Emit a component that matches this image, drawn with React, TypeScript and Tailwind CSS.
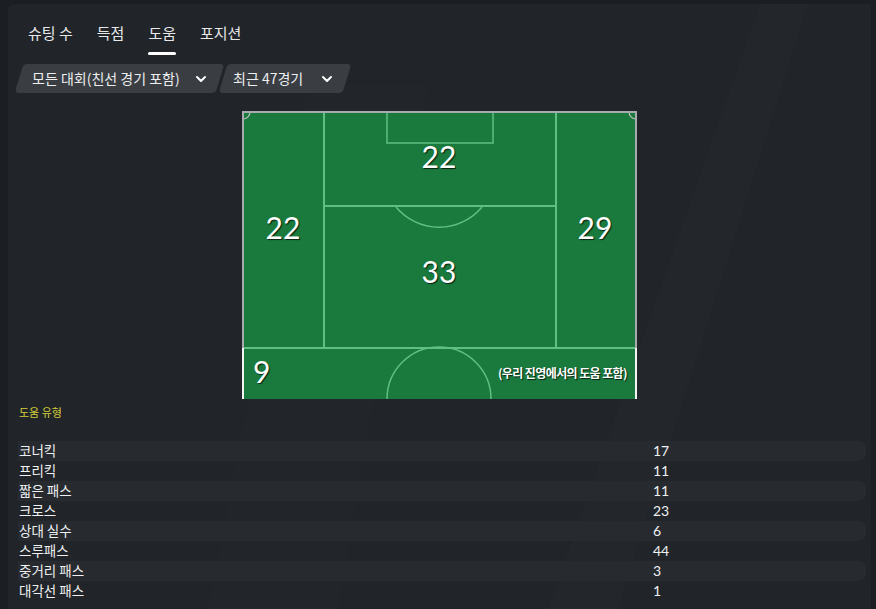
import { ChevronDown } from 'lucide-react'

const TABS = ['슈팅 수', '득점', '도움', '포지션']

const ASSIST_TYPES: [string, number][] = [
  ['코너킥', 17],
  ['프리킥', 11],
  ['짧은 패스', 11],
  ['크로스', 23],
  ['상대 실수', 6],
  ['스루패스', 44],
  ['중거리 패스', 3],
  ['대각선 패스', 1],
]

const KR = { fontFamily: '"Noto Sans CJK KR", "Noto Sans", sans-serif' }
const NUM = { fontFamily: 'Lato, "Noto Sans CJK KR", sans-serif' }

// ── Pitch ────────────────────────────────────────────────────────────────────

function PitchLines() {
  const line = '#5fbf80'
  return (
    <svg className="absolute inset-0" width="395" height="288" viewBox="0 0 395 288">
      {/* zone lines */}
      <line x1="82" y1="0" x2="82" y2="237" stroke={line} strokeWidth="2" />
      <line x1="314" y1="0" x2="314" y2="237" stroke={line} strokeWidth="2" />
      <line x1="82" y1="95" x2="314" y2="95" stroke={line} strokeWidth="2" />
      <line x1="0" y1="237" x2="395" y2="237" stroke={line} strokeWidth="2" />
      {/* six-yard box */}
      <rect x="145" y="0" width="106" height="32" fill="none" stroke={line} strokeWidth="1.5" />
      {/* D */}
      <path d="M154 96 A 56 56 0 0 0 240 96" fill="none" stroke={line} strokeWidth="1.5" />
      {/* centre circle */}
      <path d="M145 288 A 52 52 0 0 1 249 288" fill="none" stroke={line} strokeWidth="1.5" />
      {/* corner arcs */}
      <path d="M1 8 A 7 7 0 0 0 8 1" fill="none" stroke="#b9bdb9" strokeWidth="1.2" />
      <path d="M387 1 A 7 7 0 0 0 394 8" fill="none" stroke="#b9bdb9" strokeWidth="1.2" />
      {/* outer border */}
      <path d="M1 237 V1 H394 V237" fill="none" stroke="#a7abad" strokeWidth="2" />
      <path d="M1 237 V288 M394 237 V288" fill="none" stroke="#f2f4f2" strokeWidth="2" />
    </svg>
  )
}

function Zone({ value, className }: { value: string; className: string }) {
  return (
    <span
      className={`absolute text-[30px] leading-none text-white -translate-x-1/2 -translate-y-1/2 [text-shadow:1px_1px_1px_#06210f] ${className}`}
      style={NUM}
    >
      {value}
    </span>
  )
}

function Pitch() {
  return (
    <div className="relative w-[395px] h-[288px] bg-[#1a7a3e] mx-auto">
      <PitchLines />
      <Zone value="22" className="left-[197px] top-[45px]" />
      <Zone value="22" className="left-[41px] top-[116px]" />
      <Zone value="29" className="left-[353px] top-[116px]" />
      <Zone value="33" className="left-[197px] top-[160px]" />
      <span
        className="absolute left-[11px] top-[260px] -translate-y-1/2 text-[30px] leading-none text-white [text-shadow:1px_1px_1px_#06210f]"
        style={NUM}
      >
        9
      </span>
      <span
        className="absolute right-[10px] top-[262px] -translate-y-1/2 text-[12px] font-bold tracking-[-0.05em] text-white [text-shadow:1px_1px_1px_#06210f]"
        style={KR}
      >
        (우리 진영에서의 도움 포함)
      </span>
    </div>
  )
}

// ── Filters ──────────────────────────────────────────────────────────────────

function FilterPill({ label, className }: { label: string; className: string }) {
  return (
    <div className={`-skew-x-[17deg] bg-[#3a3e43] rounded-[4px] h-[29px] flex items-center ${className}`}>
      <div className="skew-x-[17deg] flex items-center w-full justify-between">
        <span className="text-[14px] text-[#eceef0]" style={KR}>{label}</span>
        <ChevronDown className="w-4 h-4 text-white" strokeWidth={3} />
      </div>
    </div>
  )
}

// ── App ──────────────────────────────────────────────────────────────────────

export default function App() {
  return (
    <div className="w-[876px] h-[609px] bg-[#1b1e22] pl-2 pt-1 pr-[5px] overflow-hidden">
      <div className="relative h-full bg-[#212428] rounded-tl-md overflow-hidden">
        {/* faint diagonal sheen */}
        <svg className="absolute inset-0 pointer-events-none" width="863" height="605">
          <polygon points="752,0 800,0 610,605 540,605" fill="#ffffff" fillOpacity="0.01" />
          <polygon points="300,80 420,80 330,605 200,605" fill="#ffffff" fillOpacity="0.006" />
        </svg>

        <div className="relative">
          {/* tabs */}
          <div className="flex pl-2 pt-[18px]">
            {TABS.map((t) => (
              <div key={t} className="flex flex-col items-center px-3">
                <span className="text-[15px] leading-[22px] text-[#e6e8ea]" style={KR}>{t}</span>
                <div className={`mt-[8px] h-[3px] w-full rounded-full ${t === '도움' ? 'bg-white' : 'bg-transparent'}`} />
              </div>
            ))}
          </div>

          {/* filters */}
          <div className="flex gap-[3px] pl-[11px] mt-[9px]">
            <FilterPill label="모든 대회(친선 경기 포함)" className="w-[201px] pl-[13px] pr-[11px]" />
            <FilterPill label="최근 47경기" className="w-[124px] pl-[10px] pr-[12px]" />
          </div>

          {/* pitch */}
          <div className="mt-[18px]">
            <Pitch />
          </div>

          {/* assist types */}
          <div className="pl-[11px] mt-[5px] text-[11px] text-[#d4cf3c]" style={KR}>도움 유형</div>

          <div className="mt-[20px] pl-[10px] pr-[5px]">
            {ASSIST_TYPES.map(([label, value], i) => (
              <div
                key={label}
                className={`flex items-center h-[20px] rounded-r-lg ${i % 2 === 0 ? 'bg-[#272a2f]' : ''}`}
              >
                <span className="pl-[1px] w-[635px] text-[13.5px] text-[#eef0f2]" style={KR}>{label}</span>
                <span className="text-[14px] text-[#eef0f2]" style={NUM}>{value}</span>
              </div>
            ))}
          </div>
        </div>
      </div>
    </div>
  )
}
